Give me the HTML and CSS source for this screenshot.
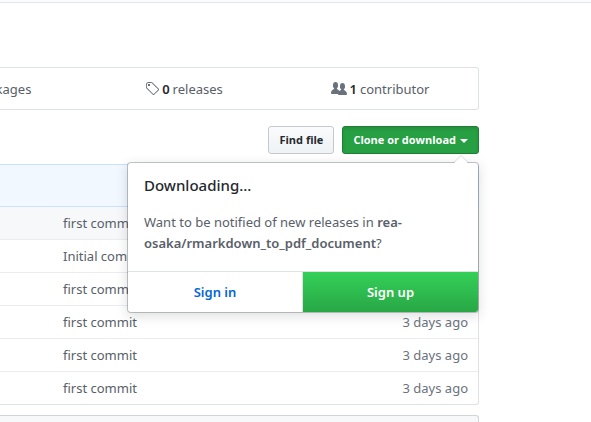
FILE: index.html
```html
<!DOCTYPE html>
<html lang="en">
<head>
<meta charset="utf-8">
<title>rea-osaka/rmarkdown_to_pdf_document</title>
<link rel="stylesheet" href="styles.css">
</head>
<body>
<header class="pagehead"></header>
<main class="repo">
  <ul class="summary">
    <li><a href="#"><svg width="16" height="16" viewBox="0 0 16 16" aria-hidden="true"><path fill="currentColor" d="M1 4.500L8 .5l7 4v7l-7 4-7-4zm1 1v5.500l5.500 3V8.500zm6.500 3V14l5.500-3V5.500z"/></svg> <b>0</b> packages</a></li>
    <li><a href="#"><svg width="14" height="16" viewBox="0 0 14 16" aria-hidden="true"><path fill="currentColor" fill-rule="evenodd" d="M7.730 1.730C7.260 1.260 6.620 1 5.960 1H3.500C2.130 1 1 2.130 1 3.500v2.470c0 .66.270 1.300.730 1.770l6.060 6.060c.39.39 1.020.39 1.410 0l4.590-4.590a.996.996 0 0 0 0-1.410L7.730 1.730zM2.380 7.090c-.31-.3-.47-.7-.47-1.130V3.500c0-.88.720-1.590 1.590-1.590h2.470c.42 0 .83.160 1.130.47l6.140 6.130-4.730 4.730-6.130-6.150zM3.010 3h2v2H3V3h.010z"/></svg> <b>0</b> releases</a></li>
    <li><a href="#"><svg width="16" height="16" viewBox="0 0 16 16" aria-hidden="true"><path fill="currentColor" fill-rule="evenodd" d="M16 12.999c0 .439-.45 1-1 1H7.995c-.539 0-.994-.447-.995-.999H1c-.54 0-1-.561-1-1 0-2.634 3-4 3-4s.229-.409 0-1c-.841-.621-1.058-.59-1-3 .058-2.419 1.367-3 2.500-3s2.442.58 2.500 3c.058 2.410-.159 2.379-1 3-.229.590 0 1 0 1s1.549.711 2.420 2.088C9.196 9.369 10 8.999 10 8.999s.229-.409 0-1c-.841-.620-1.058-.590-1-3 .058-2.419 1.367-3 2.500-3s2.437.581 2.495 3c.059 2.410-.158 2.380-1 3-.229.590 0 1 0 1s3.005 1.366 3.005 4"/></svg> <b>1</b> contributor</a></li>
  </ul>

  <div class="toolbar">
    <button class="btn" type="button">Find file</button>
    <div class="clone">
      <button class="btn btn-primary" type="button">Clone or download<span class="caret"></span></button>
      <section class="popover">
        <div class="popover-body">
          <h4>Downloading...</h4>
          <p>Want to be notified of new releases in <strong>rea-osaka/rmarkdown_to_pdf_document</strong>?</p>
        </div>
        <div class="popover-actions">
          <a class="sign-in" href="#">Sign in</a>
          <a class="sign-up" href="#">Sign up</a>
        </div>
      </section>
    </div>
  </div>

  <div class="commit-bar"></div>
  <table class="files">
    <tbody>
      <tr class="active"><td class="name"></td><td><a href="#">first commit</a></td><td class="age"></td></tr>
      <tr><td class="name"></td><td><a href="#">Initial commit</a></td><td class="age"></td></tr>
      <tr><td class="name"></td><td><a href="#">first commit</a></td><td class="age"></td></tr>
      <tr><td class="name"></td><td><a href="#">first commit</a></td><td class="age">3 days ago</td></tr>
      <tr><td class="name"></td><td><a href="#">first commit</a></td><td class="age">3 days ago</td></tr>
      <tr><td class="name"></td><td><a href="#">first commit</a></td><td class="age">3 days ago</td></tr>
    </tbody>
  </table>
  <div class="readme"></div>
</main>
</body>
</html>
```
FILE: styles.css
```css
* { box-sizing: border-box; }
body {
  display: flex;
  flex-direction: column;
  min-height: 100vh;
  margin: 0;
  background: #fff;
  color: #586069;
  font: 13px/20px "Noto Sans", "Open Sans", sans-serif;
}
a { color: inherit; text-decoration: none; }

.pagehead {
  height: 3px;
  background: #fafbfc;
  border-bottom: 1px solid #e1e4e8;
}
.repo {
  display: flex;
  flex: 1;
  flex-direction: column;
  margin: 64px 112px 0 0;
}

.summary {
  display: flex;
  justify-content: flex-end;
  overflow: hidden;
  margin: 0 0 16px;
  padding: 0;
  list-style: none;
  border: 1px solid #dfe2e5;
  border-left: 0;
  border-radius: 0 3px 3px 0;
}
.summary li { flex: 0 0 196px; }
.summary a {
  display: flex;
  align-items: center;
  justify-content: center;
  gap: 3px;
  height: 41px;
}
.summary svg { color: #6a737d; }
.summary b { color: #24292e; font-weight: 600; }

.toolbar {
  display: flex;
  justify-content: flex-end;
  gap: 8px;
  margin-bottom: 10px;
}
.clone { position: relative; }
.btn {
  display: block;
  height: 28px;
  padding: 0 10px;
  border: 1px solid #c5c9cd;
  border-radius: 3px;
  background: linear-gradient(#fafbfc, #eff3f6 90%);
  color: #24292e;
  font: 700 11px/20px "Open Sans", "Noto Sans", sans-serif;
  white-space: nowrap;
}
.btn-primary {
  border-color: #1e7e34;
  background: #279f43;
  box-shadow: inset 0 2px 3px rgba(27, 31, 35, .12);
  color: #fff;
}
.caret {
  display: inline-block;
  margin-left: 4px;
  vertical-align: middle;
  border: 4px solid transparent;
  border-top-color: currentColor;
  border-bottom: 0;
}

.popover {
  position: absolute;
  z-index: 2;
  top: 36px;
  right: 0;
  width: 352px;
  border: 1px solid rgba(27, 31, 35, .25);
  border-radius: 4px;
  background: #fff;
  background-clip: padding-box;
  box-shadow: 0 3px 12px rgba(27, 31, 35, .15);
}
.popover::before,
.popover::after {
  content: "";
  position: absolute;
  right: 9px;
  bottom: 100%;
  border: 8px solid transparent;
  border-top: 0;
  border-bottom-color: rgba(27, 31, 35, .15);
}
.popover::after {
  right: 10px;
  border-width: 7px;
  border-top: 0;
  border-bottom-color: #fff;
}
.popover-body { padding: 12px 16px 17px; }
.popover h4 {
  margin: 0 0 16px;
  color: #24292e;
  font-size: 15px;
  font-weight: 500;
  line-height: 21px;
}
.popover p { margin: 0; line-height: 21px; }
.popover strong { font-weight: 600; }
.popover-actions {
  display: grid;
  grid-template-columns: 1fr 1fr;
  border-top: 1px solid #dfe2e5;
}
.popover-actions a {
  padding: 10px;
  font-weight: 600;
  text-align: center;
}
.sign-in { color: #0366d6; border-right: 1px solid #dfe2e5; }
.popover .sign-up {
  border-radius: 0 0 3px 0;
  background: linear-gradient(#34d058, #28a745);
  color: #fff;
}

.commit-bar {
  height: 43px;
  border: 1px solid #c8e1ff;
  border-left: 0;
  border-radius: 0 3px 0 0;
  background: #f1f8ff;
}
.files {
  width: 100%;
  border: 1px solid #dfe2e5;
  border-width: 0 1px 1px 0;
  border-radius: 0 0 3px 0;
  border-spacing: 0;
}
.files td { height: 33px; padding: 6px 10px; border-top: 1px solid #eaecef; }
.files .active td { height: 32px; border-top: 0; background: #f6f8fa; }
.files .name { width: 53px; padding: 0; }
.files .age { color: #6a737d; text-align: right; white-space: nowrap; }

.readme {
  flex: 1;
  margin-top: 10px;
  border: 1px solid #d1d5da;
  border-width: 1px 1px 0 0;
  border-radius: 0 3px 0 0;
  background: #f6f8fa;
}
```
